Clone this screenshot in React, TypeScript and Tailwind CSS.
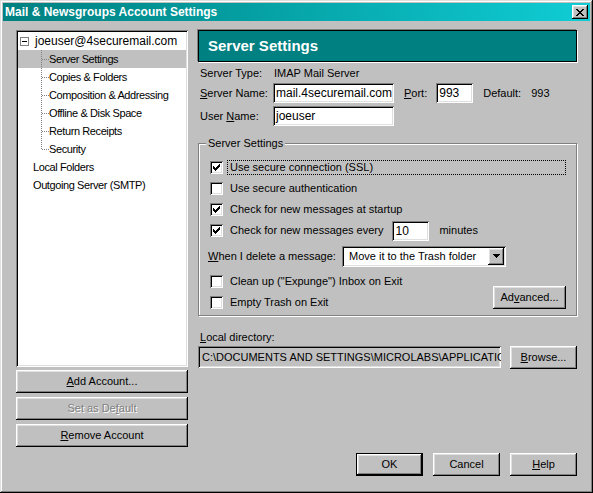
import React from "react";

const raised =
  "shadow-[inset_-1px_-1px_0_#000,inset_1px_1px_0_#fff,inset_-2px_-2px_0_#808080,inset_2px_2px_0_#dfdfdf]";
const sunken =
  "shadow-[inset_1px_1px_0_#808080,inset_-1px_-1px_0_#fff,inset_2px_2px_0_#000,inset_-2px_-2px_0_#dfdfdf]";
const defaultBtn =
  "shadow-[inset_0_0_0_1px_#000,inset_-2px_-2px_0_#000,inset_2px_2px_0_#fff,inset_-3px_-3px_0_#808080,inset_3px_3px_0_#dfdfdf]";

function Check({ checked }: { checked?: boolean }) {
  return (
    <span className={`flex h-[13px] w-[13px] shrink-0 bg-white ${sunken}`}>
      {checked && (
        <svg width="13" height="13" viewBox="0 0 13 13" shapeRendering="crispEdges">
          <rect x="3" y="5" width="1" height="3" fill="#000" />
          <rect x="4" y="6" width="1" height="3" fill="#000" />
          <rect x="5" y="7" width="1" height="3" fill="#000" />
          <rect x="6" y="6" width="1" height="3" fill="#000" />
          <rect x="7" y="5" width="1" height="3" fill="#000" />
          <rect x="8" y="4" width="1" height="3" fill="#000" />
          <rect x="9" y="3" width="1" height="3" fill="#000" />
        </svg>
      )}
    </span>
  );
}

function Btn({
  children,
  className = "",
  isDefault,
  disabled,
}: {
  children: React.ReactNode;
  className?: string;
  isDefault?: boolean;
  disabled?: boolean;
}) {
  return (
    <div
      className={`flex shrink-0 items-center justify-center bg-[#c0c0c0] ${isDefault ? defaultBtn : raised} ${
        disabled ? "text-[#808080] [text-shadow:1px_1px_0_#fff]" : "text-black"
      } ${className}`}
    >
      {children}
    </div>
  );
}

function TreeChild({ label, last, selected }: { label: string; last?: boolean; selected?: boolean }) {
  return (
    <div className={`flex h-[18px] items-center pl-[23px] ${selected ? "bg-[#c0c0c0]" : ""}`}>
      <svg width="8" height="18" viewBox="0 0 8 18" shapeRendering="crispEdges" className="shrink-0">
        <line x1="0.5" y1="0" x2="0.5" y2={last ? 9 : 18} stroke="#808080" strokeDasharray="1 1" />
        <line x1="1" y1="9.5" x2="8" y2="9.5" stroke="#808080" strokeDasharray="1 1" />
      </svg>
      <span className="whitespace-nowrap tracking-[-0.4px]">{label}</span>
    </div>
  );
}

function CheckRow({
  checked,
  children,
  focus,
}: {
  checked?: boolean;
  children: React.ReactNode;
  focus?: boolean;
}) {
  return (
    <div className="flex h-[21px] items-center pl-[11px]">
      <Check checked={checked} />
      {focus ? (
        <div className="ml-[4px] mr-[10px] flex h-[15px] flex-1 items-center border border-dotted border-black pl-[2px]">
          {children}
        </div>
      ) : (
        <div className="ml-[7px] flex items-center">{children}</div>
      )}
    </div>
  );
}

export default function App() {
  return (
    <div
      className={`flex h-[493px] w-[593px] flex-col bg-[#c0c0c0] p-[3px] font-['Liberation_Sans',Arial,sans-serif] text-[11px] text-black shadow-[inset_-1px_-1px_0_#000,inset_1px_1px_0_#dfdfdf,inset_-2px_-2px_0_#808080,inset_2px_2px_0_#fff]`}
    >
      {/* Title bar */}
      <div className="flex h-[18px] shrink-0 items-center bg-gradient-to-r from-[#008080] to-[#10cdd5] pl-[2px] pr-[2px]">
        <span className="flex-1 whitespace-nowrap text-[12px] font-bold text-white">
          Mail &amp; Newsgroups Account Settings
        </span>
        <div className={`flex h-[14px] w-[16px] items-center justify-center bg-[#c0c0c0] ${raised}`}>
          <svg width="8" height="7" viewBox="0 0 8 7" shapeRendering="crispEdges">
            <path d="M0 0h2v1h-2zM6 0h2v1h-2zM1 1h2v1h-2zM5 1h2v1h-2zM2 2h4v1h-4zM3 3h2v1h-2zM2 4h4v1h-4zM1 5h2v1h-2zM5 5h2v1h-2zM0 6h2v1h-2zM6 6h2v1h-2z" fill="#000" />
          </svg>
        </div>
      </div>

      {/* Body */}
      <div className="flex flex-1 gap-[10px] px-[13px] pt-[9px]">
        {/* Left column */}
        <div className="flex w-[172px] shrink-0 flex-col">
          <div className={`h-[337px] bg-white p-[2px] ${sunken}`}>
            <div className="flex h-[18px] items-center pl-[2px] text-[12px]">
              <span className="flex h-[9px] w-[9px] items-center justify-center border border-[#808080] bg-white">
                <span className="h-[1px] w-[5px] bg-black" />
              </span>
              <span className="ml-[6px] whitespace-nowrap">joeuser@4securemail.com</span>
            </div>
            <TreeChild label="Server Settings" selected />
            <TreeChild label="Copies & Folders" />
            <TreeChild label="Composition & Addressing" />
            <TreeChild label="Offline & Disk Space" />
            <TreeChild label="Return Receipts" />
            <TreeChild label="Security" last />
            <div className="flex h-[18px] items-center pl-[15px] tracking-[-0.4px]">Local Folders</div>
            <div className="flex h-[18px] items-center pl-[15px] tracking-[-0.4px]">Outgoing Server (SMTP)</div>
          </div>
          <Btn className="mt-[3px] h-[23px]">
            <span>
              <u>A</u>dd Account...
            </span>
          </Btn>
          <Btn className="mt-[4px] h-[23px]" disabled>
            <span>
              Set as De<u>f</u>ault
            </span>
          </Btn>
          <Btn className="mt-[4px] h-[23px]">
            <span>
              <u>R</u>emove Account
            </span>
          </Btn>
        </div>

        {/* Right column */}
        <div className="flex w-[379px] shrink-0 flex-col">
          <div className="flex h-[32px] items-center border border-black bg-[#008080] pl-[9px] shadow-[-1px_-1px_0_#808080,1px_1px_0_#fff]">
            <span className="text-[15px] font-bold text-white">Server Settings</span>
          </div>

          <div className="mt-[1px] flex h-[20px] items-center pl-[2px]">
            <span className="w-[74px]">Server Type:</span>
            <span>IMAP Mail Server</span>
          </div>
          <div className="flex h-[20px] items-center pl-[2px]">
            <span className="w-[73px]">
              <u>S</u>erver Name:
            </span>
            <div className={`flex h-[20px] w-[121px] items-center overflow-hidden whitespace-nowrap bg-white pl-[3px] text-[12px] ${sunken}`}>
              mail.4securemail.com
            </div>
            <span className="ml-[10px]">
              <u>P</u>ort:
            </span>
            <div className={`ml-[9px] flex h-[20px] w-[37px] items-center bg-white pl-[3px] text-[12px] ${sunken}`}>
              993
            </div>
            <span className="ml-[10px]">Default:</span>
            <span className="ml-[10px]">993</span>
          </div>
          <div className="mt-[3px] flex h-[20px] items-center pl-[2px]">
            <span className="w-[73px]">
              User <u>N</u>ame:
            </span>
            <div className={`flex h-[20px] w-[121px] items-center bg-white pl-[3px] text-[12px] ${sunken}`}>
              joeuser
            </div>
          </div>

          {/* Group box */}
          <div className="relative mt-[17px] flex h-[173px] flex-col border border-[#808080] pt-[13px] shadow-[1px_1px_0_#fff,inset_1px_1px_0_#fff]">
            <span className="absolute left-[7px] top-[-8px] bg-[#c0c0c0] px-[2px] leading-[14px]">Server Settings</span>
            <CheckRow checked focus>
              Use secure connection (SSL)
            </CheckRow>
            <CheckRow>Use secure authentication</CheckRow>
            <CheckRow checked>Check for new messages at startup</CheckRow>
            <CheckRow checked>
              <span>Check for new messages every</span>
              <div className={`ml-[9px] flex h-[20px] w-[37px] items-center bg-white pl-[3px] text-[12px] ${sunken}`}>
                10
              </div>
              <span className="ml-[10px]">minutes</span>
            </CheckRow>
            <div className="mt-[4px] flex h-[22px] items-center pl-[9px]">
              <span className="w-[134px]">
                <u>W</u>hen I delete a message:
              </span>
              <div className={`flex h-[21px] w-[164px] items-center bg-white pl-[2px] pr-[2px] ${sunken}`}>
                <span className="flex-1 whitespace-nowrap pl-[5px]">Move it to the Trash folder</span>
                <div className={`flex h-[17px] w-[16px] shrink-0 items-center justify-center bg-[#c0c0c0] ${raised}`}>
                  <svg width="7" height="4" viewBox="0 0 7 4" shapeRendering="crispEdges">
                    <path d="M0 0h7v1h-7zM1 1h5v1h-5zM2 2h3v1h-3zM3 3h1v1h-1z" fill="#000" />
                  </svg>
                </div>
              </div>
            </div>
            <div className="mt-[4px] flex">
              <div className="flex flex-1 flex-col">
                <CheckRow>Clean up (&quot;Expunge&quot;) Inbox on Exit</CheckRow>
                <CheckRow>Empty Trash on Exit</CheckRow>
              </div>
              <Btn className="mb-[4px] mr-[10px] h-[23px] w-[73px] self-end">
                <span>
                  Ad<u>v</u>anced...
                </span>
              </Btn>
            </div>
          </div>

          <div className="mt-[12px] flex h-[18px] items-center pl-[2px]">
            <span>
              <u>L</u>ocal directory:
            </span>
          </div>
          <div className="flex items-start gap-[9px]">
            <div className={`h-[22px] w-[303px] shrink-0 overflow-hidden bg-[#c0c0c0] ${sunken}`}>
              <div className="whitespace-nowrap pl-[4px] text-[11px] leading-[22px]">
                {"C:\\DOCUMENTS AND SETTINGS\\MICROLABS\\APPLICATION DATA"}
              </div>
            </div>
            <Btn className="h-[23px] w-[67px]">
              <span>
                <u>B</u>rowse...
              </span>
            </Btn>
          </div>

          <div className="mt-[84px] flex justify-end gap-[10px]">
            <Btn className="h-[23px] w-[67px]" isDefault>
              OK
            </Btn>
            <Btn className="h-[23px] w-[67px]">Cancel</Btn>
            <Btn className="h-[23px] w-[67px]">
              <span>
                <u>H</u>elp
              </span>
            </Btn>
          </div>
        </div>
      </div>
    </div>
  );
}
